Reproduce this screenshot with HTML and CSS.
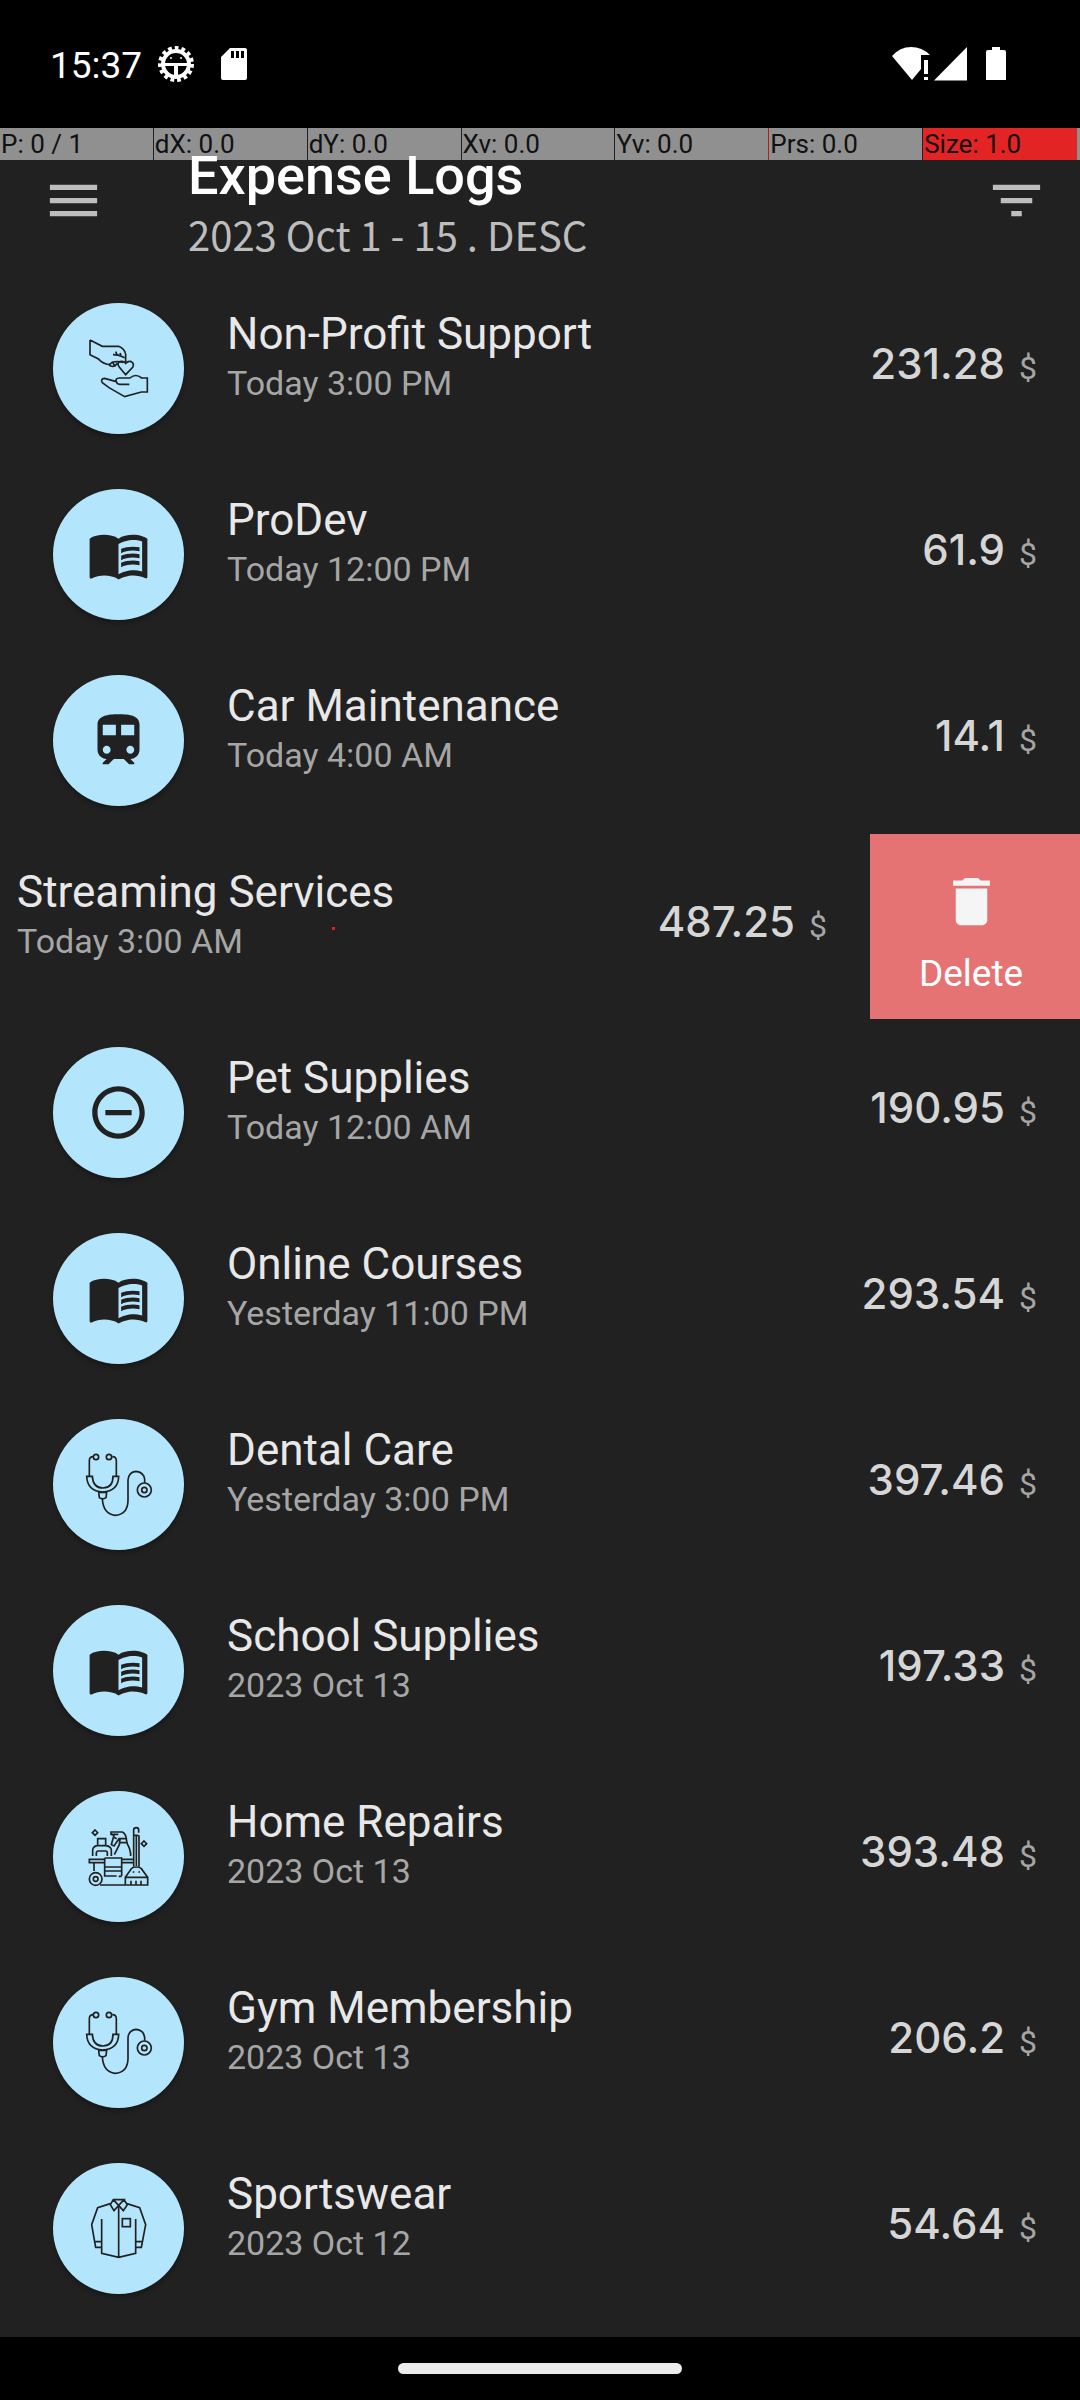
FILE: index.html
```html
<!DOCTYPE html>
<html lang="en">
<head>
<meta charset="utf-8">
<meta name="viewport" content="width=device-width, initial-scale=1">
<title>Expense Logs</title>
<link rel="stylesheet" href="styles.css">
</head>
<body>
<svg class="defs" aria-hidden="true">
  <symbol id="book" viewBox="0 0 24 24"><path d="M21 5c-1.110-.35-2.330-.5-3.500-.5-1.950 0-4.050.4-5.500 1.500-1.450-1.100-3.550-1.500-5.500-1.500S2.450 4.900 1 6v14.650c0 .25.25.5.5.5.1 0 .15-.05.25-.05C3.100 20.450 5.050 20 6.500 20c1.950 0 4.050.4 5.500 1.500 1.350-.85 3.800-1.500 5.500-1.500 1.650 0 3.350.3 4.750 1.050.1.05.15.05.25.05.25 0 .5-.25.5-.5V6c-.6-.45-1.250-.75-2-1zm0 13.500c-1.100-.35-2.300-.5-3.500-.5-1.700 0-4.150.65-5.500 1.500V8c1.350-.85 3.800-1.500 5.500-1.500 1.200 0 2.400.15 3.500.5v11.500z"/><path d="M17.500 10.500c.88 0 1.730.09 2.500.26V9.240c-.79-.15-1.640-.24-2.500-.24-1.700 0-3.240.29-4.500.83v1.660c1.130-.64 2.700-.99 4.500-.99zM13 12.490v1.660c1.130-.64 2.700-.99 4.500-.99.88 0 1.730.09 2.500.26V11.900c-.79-.15-1.640-.24-2.500-.24-1.700 0-3.240.3-4.500.83zm4.500 1.840c-1.700 0-3.240.29-4.500.83v1.660c1.130-.64 2.700-.99 4.500-.99.88 0 1.730.09 2.500.26v-1.520c-.79-.16-1.640-.24-2.500-.24z"/></symbol>
  <symbol id="train" viewBox="0 0 24 24"><path d="M12 2c-4 0-8 .5-8 4v9.500C4 17.430 5.570 19 7.500 19L6 20.500v.5h2.230l2-2H14l2 2h2v-.5L16.500 19c1.930 0 3.500-1.570 3.500-3.500V6c0-3.500-3.580-4-8-4zM7.500 17c-.83 0-1.500-.67-1.500-1.500S6.670 14 7.500 14s1.500.67 1.500 1.500S8.330 17 7.500 17zm3.500-7H6V6h5v4zm2 0V6h5v4h-5zm3.500 7c-.83 0-1.500-.67-1.500-1.500s.67-1.500 1.500-1.500 1.500.67 1.500 1.500-.67 1.500-1.500 1.500z"/></symbol>
  <symbol id="minus" viewBox="0 0 24 24"><path d="M7 11v2h10v-2H7zm5-9C6.480 2 2 6.480 2 12s4.480 10 10 10 10-4.480 10-10S17.520 2 12 2zm0 18c-4.410 0-8-3.590-8-8s3.590-8 8-8 8 3.590 8 8-3.590 8-8 8z"/></symbol>
  <symbol id="steth" viewBox="39 57 393 393"><g fill="none" stroke="currentColor" stroke-width="5"><path d="M148 228v-46q0-12 12-12M229 228v-46q0-12-12-12"/><circle cx="168" cy="171" r="8"/><circle cx="207" cy="171" r="8"/><path d="M140 229h17q2 35 32 35t30-35h17q-1 45-48 47-46-2-48-47z"/><path d="M176 277h24l-2 16q-10 7-20 0z"/><path d="M187 297q3 45 38 49 38-3 39-44v-62q2-24 24-26 23 2 26 24v10"/><circle cx="313" cy="270" r="21"/><circle cx="313" cy="270" r="8"/></g></symbol>
  <symbol id="clean" viewBox="39 33 393 393"><g fill="none" stroke="currentColor" stroke-width="5"><path d="M165 150l8 8-8 8-8-8zM312 183l8 8-8 8-8-8z"/><path d="M173 197v-21h24v21M158 228v-18q1-11 14-13h26q15 2 16 13v18M169 228v-10q1-5 6-5h22q5 0 5 5v10"/><path d="M213 163v-7h34q11 6 12 20h-22l-15 22-8-4 8-28zM213 163h22M237 188h25M240 178l-2 16-15 30M259 178l3 14q10 16 10 36M230 176l-8-4"/><path d="M281 260V150q0-7 8-7 7 0 7 7v8M297 166v94M289 168v90M283 166h12"/><path d="M194 238h-46v10h46M246 238h34M246 248h34M194 234h51v54M194 234v54h36M194 261h51M194 273h51M236 289h9M162 248v25"/><circle cx="167" cy="297" r="19"/><circle cx="167" cy="297" r="7"/><path d="M180 315h143v-23l-19-26q-5-5-15-5-10 0-15 5l-18 26v23M256 292h67M273 302v12M288 302v12M303 302v12M278 276h5M295 276h5"/></g></symbol>
  <symbol id="shirt" viewBox="39 39 393 393"><g fill="none" stroke="currentColor" stroke-width="5"><path d="M211 161l-38 12-18 51 12 68h18M261 161l38 12 18 51-13 68h-18M185 207v103l51 12 51-12V207M165 275h20M287 275h19M236 168v154"/><path d="M220 149h32l-30 33-11-18zM252 149l10 15-12 18-30-33"/><rect x="247" y="206" width="24" height="24"/></g></symbol>
  <symbol id="give" viewBox="39 39 393 393"><g fill="none" stroke="currentColor" stroke-width="5"><path d="M150 150l37 19h49q18 7 21 24v23M150 150v44l24 12q17 18 37 18M219 194q17 0 25 5l10 4M227 185l4 9M240 189l3 7"/><path d="M208 224l10-8q17-3 32 1M207 226q9 5 18 2l7-9M219 218q4 12 13 4"/><path d="M257 254l-20-24q-7-11 3-15 11-3 17 5 7-8 17-5 10 5 4 17z"/><path d="M238 264h32q17-15 35 0h17v42h-18l-50 14-47-27-20-15q-7-12 7-13l35 10q-4-10 9-11zM229 275q2 8 10 8h29"/></g></symbol>
</svg>

<div class="status">
  <span class="time">15:37</span>
  <svg class="gear" viewBox="0 0 36 38" aria-hidden="true"><g fill="none" stroke="#fff"><circle cx="18" cy="19" r="13" stroke-width="4"/><circle cx="18" cy="19" r="16" stroke-width="4" stroke-dasharray="3.700 3"/></g><path fill="#fff" d="M5 18h26v3H20v12h-4V21H5z"/><circle cx="13" cy="13" r="1" fill="#fff"/><circle cx="23" cy="13" r="1" fill="#fff"/></svg>
  <svg class="card" viewBox="0 0 26 32" aria-hidden="true"><path fill="#fff" fill-rule="evenodd" d="M9 0h15q2 0 2 2v28q0 2-2 2H2q-2 0-2-2V9zM10 3v7h3V3zm5 0v7h3V3zm5 0v7h3V3z"/></svg>
  <svg class="signals" viewBox="0 0 114 34" aria-hidden="true"><g fill="#fff"><path d="M0 9Q8 0 19 0t19 8h-9v14l-9 11zM32 13h4v14h-4zM32 30h4v3h-4zM42 33.500L75 0v33.500zM94 5q0-2 2-2h4V0h8v3h4q2 0 2 2v28H94z"/></g></svg>
</div>

<div class="pointer">
  <span>P: 0 / 1</span><span>dX: 0.0</span><span>dY: 0.0</span><span>Xv: 0.0</span><span class="warn">Yv: 0.0</span><span>Prs: 0.0</span><span class="size">Size: 1.0</span>
</div>

<header class="bar">
  <button class="icon-button" aria-label="Menu"><svg viewBox="0 0 24 24"><path d="M3 18h18v-2H3v2zm0-5h18v-2H3v2zm0-7v2h18V6H3z"/></svg></button>
  <div class="heading"><h1>Expense Logs</h1><p>2023 Oct 1 - 15 . DESC</p></div>
  <button class="icon-button" aria-label="Filter"><svg viewBox="0 0 24 24"><path d="M10 18h4v-2h-4v2zM3 6v2h18V6H3zm3 7h12v-2H6v2z"/></svg></button>
</header>

<main>
<ul class="logs">
  <li class="row"><span class="badge"><svg class="full"><use href="#give"/></svg></span><div class="info"><h2>Non-Profit Support</h2><p>Today 3:00 PM</p></div><div class="amount">231.28<span>$</span></div></li>
  <li class="row"><span class="badge"><svg><use href="#book"/></svg></span><div class="info"><h2>ProDev</h2><p>Today 12:00 PM</p></div><div class="amount">61.9<span>$</span></div></li>
  <li class="row"><span class="badge"><svg><use href="#train"/></svg></span><div class="info"><h2>Car Maintenance</h2><p>Today 4:00 AM</p></div><div class="amount">14.1<span>$</span></div></li>
  <li class="swipe">
    <div class="row"><span class="badge"></span><div class="info"><h2>Streaming Services</h2><p>Today 3:00 AM</p></div><div class="amount">487.25<span>$</span></div></div>
    <button class="delete"><svg viewBox="0 0 24 24" aria-hidden="true"><path d="M6 19c0 1.100.9 2 2 2h8c1.100 0 2-.9 2-2V7H6v12zM19 4h-3.500l-1-1h-5l-1 1H5v2h14V4z"/></svg>Delete</button>
    <i class="touch"></i>
  </li>
  <li class="row"><span class="badge"><svg><use href="#minus"/></svg></span><div class="info"><h2>Pet Supplies</h2><p>Today 12:00 AM</p></div><div class="amount">190.95<span>$</span></div></li>
  <li class="row"><span class="badge"><svg><use href="#book"/></svg></span><div class="info"><h2>Online Courses</h2><p>Yesterday 11:00 PM</p></div><div class="amount">293.54<span>$</span></div></li>
  <li class="row"><span class="badge"><svg class="full"><use href="#steth"/></svg></span><div class="info"><h2>Dental Care</h2><p>Yesterday 3:00 PM</p></div><div class="amount">397.46<span>$</span></div></li>
  <li class="row"><span class="badge"><svg><use href="#book"/></svg></span><div class="info"><h2>School Supplies</h2><p>2023 Oct 13</p></div><div class="amount">197.33<span>$</span></div></li>
  <li class="row"><span class="badge"><svg class="full"><use href="#clean"/></svg></span><div class="info"><h2>Home Repairs</h2><p>2023 Oct 13</p></div><div class="amount">393.48<span>$</span></div></li>
  <li class="row"><span class="badge"><svg class="full"><use href="#steth"/></svg></span><div class="info"><h2>Gym Membership</h2><p>2023 Oct 13</p></div><div class="amount">206.2<span>$</span></div></li>
  <li class="row"><span class="badge"><svg class="full"><use href="#shirt"/></svg></span><div class="info"><h2>Sportswear</h2><p>2023 Oct 12</p></div><div class="amount">54.64<span>$</span></div></li>
</ul>
</main>
<footer class="nav"><span class="pill"></span></footer>
</body>
</html>
```
FILE: styles.css
```css
* { box-sizing: border-box; }
body {
  margin: 0;
  min-height: 100vh;
  display: flex;
  flex-direction: column;
  background: #212121;
  color: #e8e8e8;
  font-family: Roboto, sans-serif;
}
h1, h2, p, ul { margin: 0; padding: 0; font-weight: 400; }
button { border: 0; padding: 0; background: none; font: inherit; }
svg { display: block; fill: currentColor; }
.defs { position: absolute; width: 0; height: 0; }

.status {
  height: 128px;
  padding: 0 74px 0 50px;
  display: flex;
  align-items: center;
  background: #000;
  color: #fff;
  font-size: 37px;
}
.time { line-height: 44px; padding-top: 4px; }
.gear { width: 36px; height: 38px; margin-left: 16px; }
.card { width: 26px; height: 32px; margin-left: 27px; }
.signals { width: 114px; height: 34px; margin-left: auto; }

.pointer {
  display: grid;
  grid-template-columns: repeat(7, 1fr);
  padding-right: 3px;
  background: #909090;
  color: #111;
  font-size: 26px;
  line-height: 32px;
}
.pointer span { padding-left: 1px; border-right: 1px solid #212121; }
.pointer .warn { border-color: #b71c1c; }
.pointer .size { background: #e32424; border: 0; }

.bar { height: 116px; display: flex; align-items: flex-start; padding: 0 32px 0 42px; }
.icon-button { padding-top: 9px; color: #bdbdbd; }
.icon-button svg { width: 63px; height: 63px; }
.heading { flex: 1; padding-left: 83px; }
h1 { color: #fff; font-size: 54px; font-weight: 500; line-height: 32px; }
.heading p {
  color: #bdbdbd;
  font-family: "Noto Sans CJK SC", sans-serif;
  font-size: 40px;
  line-height: 84px;
}

.logs { list-style: none; }
.row {
  height: 186px;
  padding: 0 43px 2px 53px;
  display: flex;
  align-items: center;
}
.badge {
  width: 131px;
  height: 131px;
  border-radius: 50%;
  display: flex;
  align-items: center;
  justify-content: center;
  background: #b3e5fc;
  color: #212121;
  box-shadow: 0 3px 5px rgba(0, 0, 0, .3);
}
.badge svg { width: 63px; height: 63px; }
.badge svg.full { width: 131px; height: 131px; }
.info { flex: 1; padding: 0 0 24px 43px; }
h2 { font-size: 44px; line-height: 54px; }
.info p { color: #a6a6a6; font-size: 34px; line-height: 44px; }
.amount {
  display: flex;
  align-items: baseline;
  gap: 14px;
  padding-bottom: 10px;
  color: #d6d6d6;
  font-family: Inter, sans-serif;
  font-size: 42px;
  font-weight: 500;
}
.amount span { color: #a6a6a6; font-family: Roboto, sans-serif; font-size: 32px; font-weight: 400; }

.swipe { position: relative; display: flex; justify-content: flex-end; overflow: hidden; }
.swipe .row { flex: 0 0 100%; }
.delete {
  flex: 0 0 210px;
  margin-bottom: 1px;
  padding: 12px 8px 0 0;
  display: flex;
  flex-direction: column;
  align-items: center;
  justify-content: center;
  gap: 20px;
  background: #e57373;
  color: #fff;
  font-size: 37px;
  line-height: 42px;
}
.delete svg { width: 63px; height: 63px; color: #f5f5f5; }
.touch { position: absolute; left: 332px; top: 93px; width: 3px; height: 3px; background: #e02020; }

.nav {
  min-height: 63px;
  margin-top: auto;
  display: flex;
  align-items: center;
  justify-content: center;
  background: #000;
}
.pill { width: 284px; height: 11px; border-radius: 6px; background: #ebebeb; }
```
